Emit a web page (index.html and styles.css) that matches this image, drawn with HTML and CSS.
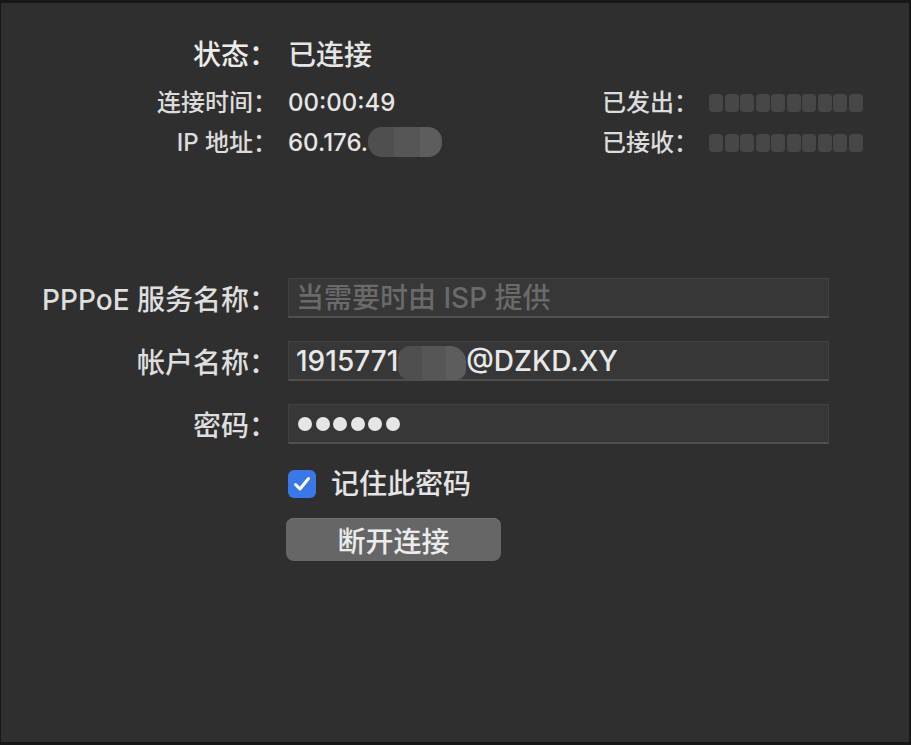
FILE: index.html
```html
<!DOCTYPE html>
<html lang="zh-CN">
<head>
    <meta charset="UTF-8">
    <meta name="viewport" content="width=device-width, initial-scale=1.0">
    <title>PPPoE</title>
    <link rel="stylesheet" href="styles.css">
</head>
<body>
    <div class="window">
        <div class="info">
            <div class="label status">状态：</div>
            <div class="value status wide">已连接</div>

            <div class="label">连接时间：</div>
            <div class="value">00:00:49</div>
            <div class="label">已发出：</div>
            <div class="bars"><span></span><span></span><span></span><span></span><span></span><span></span><span></span><span></span><span></span><span></span></div>

            <div class="label">IP 地址：</div>
            <div class="value">60.176.<span class="blur blur-ip"></span></div>
            <div class="label">已接收：</div>
            <div class="bars"><span></span><span></span><span></span><span></span><span></span><span></span><span></span><span></span><span></span><span></span></div>
        </div>

        <div class="form">
            <div class="flabel">PPPoE 服务名称：</div>
            <div class="field placeholder">当需要时由 ISP 提供</div>

            <div class="flabel">帐户名称：</div>
            <div class="field">1915771<span class="blur blur-acct"></span>@DZKD.XY</div>

            <div class="flabel">密码：</div>
            <div class="field dots"><span></span><span></span><span></span><span></span><span></span><span></span></div>

            <div></div>
            <label class="check">
                <span class="box">
                    <svg width="22" height="22" viewBox="0 0 22 22"><path d="M4.5 11.5 L9 16 L17.5 5.5" fill="none" stroke="#fff" stroke-width="3" stroke-linecap="round" stroke-linejoin="round"/></svg>
                </span>
                记住此密码
            </label>

            <div></div>
            <div class="actions">
                <button class="btn">断开连接</button>
            </div>
        </div>
    </div>
</body>
</html>
```

FILE: styles.css
```css
html, body {
    margin: 0;
    background: #171717;
}
body {
    font-family: Inter, "Noto Sans CJK SC", sans-serif;
    color: #e4e4e4;
}
.window {
    box-sizing: border-box;
    width: 911px;
    height: 745px;
    background: #2f2f2f;
    border-style: solid;
    border-color: #171717;
    border-width: 3px 2px 3px 1px;
    padding-top: 32px;
}
.info {
    display: grid;
    grid-template-columns: 276px 303px 96px auto;
    column-gap: 11px;
    align-items: center;
    font-size: 24px;
    font-weight: 500;
}
.info > div {
    height: 40px;
    line-height: 40px;
    white-space: nowrap;
}
.label {
    text-align: right;
    color: #dcdcdc;
}
.status {
    font-size: 28px;
    font-weight: 500;
    margin-bottom: 8px;
    color: #ececec;
}
.wide {
    grid-column: span 3;
}
.value {
    color: #e6e6e6;
}
.blur {
    display: inline-block;
    vertical-align: middle;
    border-radius: 14px;
    background: linear-gradient(90deg, #4f4f4f 0 35%, #565656 35% 70%, #5d5d5d 70%);
}
.blur-ip {
    width: 74px;
    height: 30px;
    margin-top: -4px;
}
.blur-acct {
    width: 68px;
    height: 34px;
    margin-top: 4px;
    border-radius: 12px 16px 10px 12px;
}
.bars {
    display: flex;
    align-items: center;
    gap: 1.5px;
}
.bars span {
    width: 14px;
    height: 18px;
    border-radius: 4px;
    background: #474747;
}
.form {
    margin-top: 115px;
    display: grid;
    grid-template-columns: 276px 541px;
    column-gap: 11px;
    row-gap: 23px;
    align-items: center;
    font-weight: 500;
}
.flabel {
    font-size: 28px;
    text-align: right;
    color: #dedede;
    white-space: nowrap;
}
.field {
    box-sizing: border-box;
    height: 40px;
    padding-left: 7px;
    display: flex;
    align-items: center;
    font-size: 28px;
    line-height: 38px;
    background: #373737;
    border: 1px solid #424242;
    border-bottom: 2px solid #505050;
    color: #e8e8e8;
    white-space: nowrap;
}
.placeholder {
    color: #6a6a6a;
}
.dots {
    gap: 3.5px;
    padding-left: 9px;
}
.dots span {
    width: 14px;
    height: 14px;
    border-radius: 50%;
    background: #e6e6e6;
}
.check {
    display: flex;
    align-items: center;
    gap: 15px;
    height: 28px;
    line-height: 28px;
    margin-top: 3px;
    font-size: 28px;
    color: #e4e4e4;
}
.box {
    width: 28px;
    height: 28px;
    border-radius: 6px;
    background: #3b78e7;
    display: flex;
    align-items: center;
    justify-content: center;
}
.actions {
    margin-top: -3px;
    margin-left: -2px;
}
.btn {
    display: block;
    width: 215px;
    height: 43px;
    border: none;
    border-radius: 8px;
    background: #666666;
    color: #ececec;
    font-family: inherit;
    font-size: 28px;
    font-weight: 500;
    padding: 0;
    box-shadow: inset 0 1px 0 #727272;
}
```
